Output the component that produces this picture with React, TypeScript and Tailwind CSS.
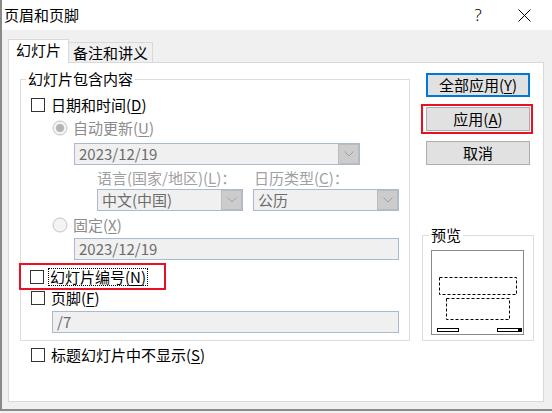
import React from "react";

function Mn({ k }: { k: string }) {
  return (
    <span>
      (<span className="underline underline-offset-2">{k}</span>)
    </span>
  );
}

function Checkbox() {
  return <span className="block h-[14px] w-[14px] shrink-0 border border-[#333333] bg-white" />;
}

function Radio({ checked }: { checked?: boolean }) {
  return (
    <svg width="16" height="16" viewBox="0 0 16 16" className="shrink-0">
      <circle cx="8" cy="8" r="7" fill="#f4f4f4" stroke="#c4c4c4" />
      {checked && <circle cx="8" cy="8" r="4" fill="#b4b4b4" />}
    </svg>
  );
}

function Chevron() {
  return (
    <svg width="10" height="6" viewBox="0 0 10 6">
      <path d="M0.5 0.5 L5 5 L9.5 0.5" fill="none" stroke="#a0a0a0" strokeWidth="1" />
    </svg>
  );
}

function Field({
  value,
  combo,
  className,
}: {
  value: string;
  combo?: boolean;
  className: string;
}) {
  return (
    <div className={`flex h-[22px] shrink-0 items-stretch border border-[#a9b9d1] bg-[#f0f0f0] ${className}`}>
      <span className="flex-1 pl-[4px] leading-[20px] text-[#6d6d6d]">{value}</span>
      {combo && (
        <span className="flex w-[21px] items-center justify-center border border-[#bcbcbc] bg-[#cccccc]">
          <Chevron />
        </span>
      )}
    </div>
  );
}

function Button({ children, focused }: { children: React.ReactNode; focused?: boolean }) {
  return (
    <div
      className={`flex h-[24px] w-[104px] items-center justify-center bg-[#e1e1e1] leading-[20px] ${
        focused ? "border-2 border-[#0078d7]" : "border border-[#adadad]"
      }`}
    >
      {children}
    </div>
  );
}

function Preview() {
  return (
    <div className="ml-[8px] mt-[5px] h-[85px] w-[93px] border border-[#8a8a8a] bg-white">
      <svg width="91" height="83" viewBox="0 0 91 83">
        <rect x="7.5" y="26.5" width="77" height="17" fill="none" stroke="#000" strokeDasharray="3 2" />
        <rect x="14.5" y="47.5" width="63" height="21" fill="none" stroke="#000" strokeDasharray="3 2" />
        <rect x="5.5" y="77.5" width="21" height="3" fill="none" stroke="#000" />
        <rect x="65.5" y="77.5" width="24" height="3" fill="none" stroke="#000" />
        <rect x="86" y="77" width="4" height="4" fill="#000" />
      </svg>
    </div>
  );
}

export default function App() {
  return (
    <div className="h-[413px] w-[552px] bg-[#f0f0f0] text-[15px] text-black font-['Noto_Sans_CJK_SC','Noto_Sans',sans-serif]">
      <div className="flex h-[411px] flex-col border-b-2 border-l-2 border-[#8a8a8a]">
        {/* title bar */}
        <div className="flex h-[30px] shrink-0 items-center bg-white pl-[2px]">
          <span className="leading-[20px]">页眉和页脚</span>
          <div className="ml-auto flex items-center pr-[5px]">
            <span className="flex w-[46px] justify-center text-[17px] font-light leading-[20px] font-['Noto_Sans',sans-serif]">
              ?
            </span>
            <span className="flex w-[46px] justify-center">
              <svg width="13" height="13" viewBox="0 0 13 13">
                <path d="M0.5 0.5 L12.5 12.5 M12.5 0.5 L0.5 12.5" stroke="#000" strokeWidth="1" />
              </svg>
            </span>
          </div>
        </div>

        {/* tabs */}
        <div className="flex items-end pl-[6px] pt-[9px]">
          <div className="relative z-10 mb-[-1px] h-[24px] border-l border-r border-t border-[#d9d9d9] bg-white px-[7px] leading-[20px]">
            幻灯片
          </div>
          <div className="h-[20px] border-r border-t border-[#d9d9d9] px-[4px] leading-[20px]">
            备注和讲义
          </div>
        </div>

        {/* panel */}
        <div className="ml-[6px] flex h-[340px] w-[536px] border border-[#d9d9d9] bg-white">
          {/* left column */}
          <div className="ml-[11px] mt-[6px] flex flex-col">
            <fieldset className="w-[390px] border border-[#dcdcdc] pb-[7px]">
              <legend className="ml-[5px] px-[2px] leading-[20px]">幻灯片包含内容</legend>
              <div className="flex flex-col">
                <div className="mt-[5px] flex h-[22px] items-center pl-[10px]">
                  <Checkbox />
                  <span className="ml-[6px] leading-[20px]">
                    日期和时间<Mn k="D" />
                  </span>
                </div>
                <div className="mt-[1px] flex h-[22px] items-center pl-[31px] text-[#8c8c8c]">
                  <Radio checked />
                  <span className="ml-[5px] leading-[20px]">
                    自动更新<Mn k="U" />
                  </span>
                </div>
                <div className="mt-[4px] pl-[53px]">
                  <Field value="2023/12/19" combo className="w-[286px]" />
                </div>
                <div className="mt-[3px] flex h-[20px] items-center pl-[76px] leading-[20px] text-[#a0a0a0]">
                  <span className="w-[157px] shrink-0">
                    语言(国家/地区)<Mn k="L" />：
                  </span>
                  <span>
                    日历类型<Mn k="C" />：
                  </span>
                </div>
                <div className="mt-[1px] flex gap-[10px] pl-[76px]">
                  <Field value="中文(中国)" combo className="w-[146px]" />
                  <Field value="公历" combo className="w-[146px]" />
                </div>
                <div className="mt-[3px] flex h-[22px] items-center pl-[31px] text-[#8c8c8c]">
                  <Radio />
                  <span className="ml-[5px] leading-[20px]">
                    固定<Mn k="X" />
                  </span>
                </div>
                <div className="mt-[2px] pl-[53px]">
                  <Field value="2023/12/19" className="w-[325px]" />
                </div>
                <div className="ml-[-2px] mt-[3px] flex h-[27px] w-[147px] items-center border-2 border-[#e81123] pl-[9px]">
                  <Checkbox />
                  <span className="ml-[4px] h-[18px] border border-dotted border-black px-[1px] leading-[16px]">
                    幻灯片编号<Mn k="N" />
                  </span>
                </div>
                <div className="flex h-[16px] items-center pl-[10px]">
                  <Checkbox />
                  <span className="ml-[6px] leading-[20px]">
                    页脚<Mn k="F" />
                  </span>
                </div>
                <div className="mt-[5px] pl-[31px]">
                  <Field value="/7" className="w-[347px]" />
                </div>
              </div>
            </fieldset>
            <div className="mt-[3px] flex h-[22px] items-center pl-[11px]">
              <Checkbox />
              <span className="ml-[6px] leading-[20px]">
                标题幻灯片中不显示<Mn k="S" />
              </span>
            </div>
          </div>

          {/* right column */}
          <div className="ml-[11px] flex w-[112px] flex-col">
            <div className="ml-[5px] mt-[10px]">
              <Button focused>
                全部应用<Mn k="Y" />
              </Button>
            </div>
            <div className="mt-[7px] w-[112px] border-2 border-[#e81123] px-[3px] py-[1px]">
              <Button>
                应用<Mn k="A" />
              </Button>
            </div>
            <div className="ml-[5px] mt-[7px]">
              <Button>取消</Button>
            </div>
            <fieldset className="ml-[1px] mt-[60px] w-[112px] border border-[#dcdcdc] pb-[5px]">
              <legend className="ml-[6px] px-[2px] leading-[20px]">预览</legend>
              <Preview />
            </fieldset>
          </div>
        </div>
      </div>
    </div>
  );
}
